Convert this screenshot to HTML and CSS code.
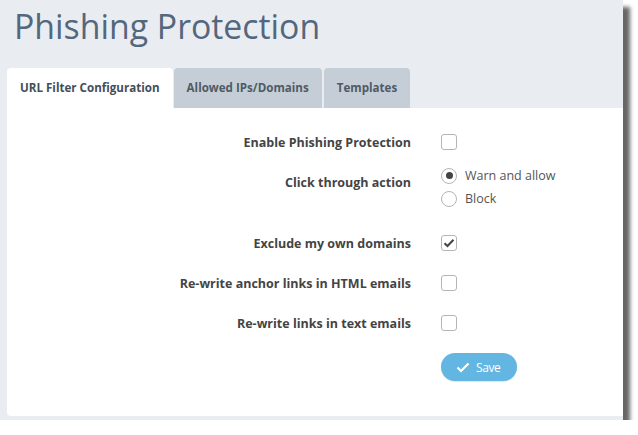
FILE: index.html
```html
<!DOCTYPE html>
<html lang="en">
<head>
    <meta charset="UTF-8">
    <meta name="viewport" content="width=device-width, initial-scale=1.0">
    <title>Phishing Protection</title>
    <link rel="stylesheet" href="styles.css">
</head>
<body>

    <div class="panel">
        <h1 class="title">Phishing Protection</h1>

        <div class="tabs">
            <div class="tab active">URL Filter Configuration</div>
            <div class="tab">Allowed IPs/Domains</div>
            <div class="tab">Templates</div>
        </div>

        <div class="content">
            <div class="row">
                <label class="label">Enable Phishing Protection</label>
                <span class="check"></span>
            </div>

            <div class="row row-radio">
                <label class="label">Click through action</label>
                <div class="options">
                    <div class="option"><span class="radio on"></span>Warn and allow</div>
                    <div class="option"><span class="radio"></span>Block</div>
                </div>
            </div>

            <div class="row">
                <label class="label">Exclude my own domains</label>
                <span class="check">
                    <svg width="12" height="10" viewBox="0 0 12 10"><path d="M1.5 5.2 L4.5 8 L10.5 1.8" fill="none" stroke="#444" stroke-width="2"/></svg>
                </span>
            </div>

            <div class="row">
                <label class="label">Re-write anchor links in HTML emails</label>
                <span class="check"></span>
            </div>

            <div class="row">
                <label class="label">Re-write links in text emails</label>
                <span class="check"></span>
            </div>

            <div class="row row-btn">
                <span class="label"></span>
                <button class="save-btn">
                    <svg width="14" height="11" viewBox="0 0 14 11"><path d="M1.5 5.5 L5 9 L12.5 1.5" fill="none" stroke="#fff" stroke-width="2.2"/></svg>
                    Save
                </button>
            </div>
        </div>
    </div>

</body>
</html>
```

FILE: styles.css
```css
body {
    margin: 0;
    background: #fff;
    font-family: "Open Sans", "Noto Sans", Arial, sans-serif;
}
.panel {
    width: 623px;
    height: 420px;
    background: #e9edf1;
    box-shadow: 7px 7px 4px rgba(0, 0, 0, 0.6);
    display: flex;
    flex-direction: column;
}
.title {
    margin: 0;
    padding: 3px 0 0 14px;
    height: 65px;
    font-size: 33.8px;
    font-weight: 400;
    color: #54677c;
    line-height: 46px;
}
.tabs {
    display: flex;
    gap: 1px;
    padding-left: 7px;
    height: 40px;
}
.tab {
    padding: 0 13px;
    line-height: 40px;
    font-size: 11.6px;
    font-weight: 700;
    color: #4f5a66;
    background: #c5ced6;
    border-radius: 4px 4px 0 0;
}
.tab.active {
    background: #fff;
    color: #434e5a;
}
.tab + .tab + .tab {
    margin-left: 1px;
}
.content {
    flex: 1;
    margin: 0 0 4px 7px;
    background: #fff;
    border-radius: 0 0 0 4px;
    padding-top: 24px;
}
.row {
    display: flex;
    align-items: center;
    height: 20px;
    margin-bottom: 20px;
}
.label {
    width: 404px;
    text-align: right;
    margin-right: 30px;
    font-size: 12.5px;
    font-weight: 700;
    color: #444;
}
.row-radio {
    align-items: flex-start;
    height: auto;
    margin-top: -8px;
    margin-bottom: 23px;
}
.row-radio .label {
    padding-top: 10px;
}
.options {
    display: flex;
    flex-direction: column;
}
.option {
    display: flex;
    align-items: center;
    height: 23px;
    font-size: 12.5px;
    color: #555;
}
.check,
.radio {
    width: 14px;
    height: 14px;
    border: 1px solid #b5b5b5;
    background: #fff;
    display: flex;
    align-items: center;
    justify-content: center;
    flex-shrink: 0;
}
.check {
    border-radius: 3px;
}
.radio {
    border-radius: 50%;
    margin-right: 8px;
}
.radio.on::after {
    content: "";
    width: 7px;
    height: 7px;
    border-radius: 50%;
    background: #444;
}
.row-btn {
    height: 28px;
    margin-top: 0;
}
.save-btn {
    width: 76px;
    height: 28px;
    border: none;
    border-radius: 14px;
    background: #63b5e2;
    color: #fff;
    font-family: inherit;
    font-size: 12px;
    letter-spacing: -0.4px;
    display: flex;
    align-items: center;
    gap: 6px;
    padding: 0 0 0 15px;
    box-shadow: 0 1px 1px rgba(0, 0, 0, 0.1);
    cursor: pointer;
}
```
